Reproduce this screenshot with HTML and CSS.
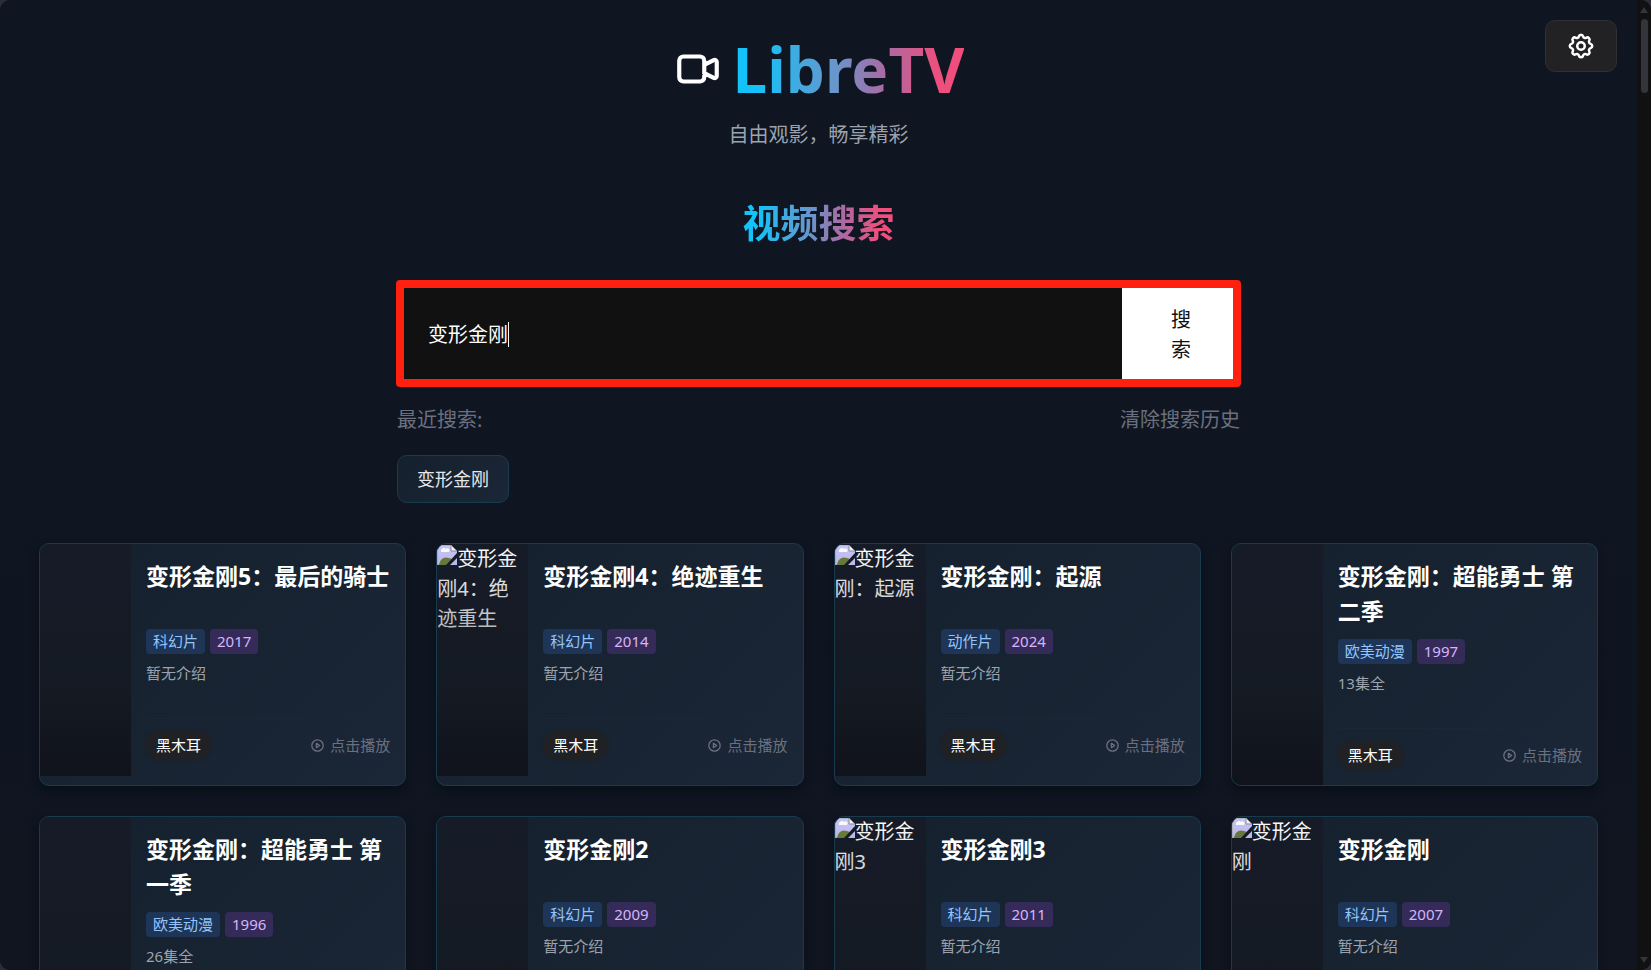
FILE: index.html
```html
<!DOCTYPE html>
<html lang="zh-CN">
<head>
<meta charset="utf-8">
<title>LibreTV</title>
<link rel="stylesheet" href="styles.css">
</head>
<body>
<svg class="sprite" aria-hidden="true">
  <symbol id="play" viewBox="0 0 24 24"><circle cx="12" cy="12" r="10.5" fill="none" stroke="currentColor" stroke-width="2.4"/><path d="M10 8l6 4-6 4z" fill="none" stroke="currentColor" stroke-width="2.4" stroke-linejoin="round"/></symbol>
  <symbol id="broken" viewBox="0 0 20 20"><path d="M0 0h14l6 6v14H0z" fill="#c8c5f8"/><path d="M0 0h14v1H1v18h4v1H0z" fill="#b4b4c0"/><path d="M4 7a3 3 0 0 1 5-3 2 2 0 0 1 3 3z" fill="#fff"/><path d="M2 20c1-6 5-9 10-7l3 1-3 6z" fill="#6c7f3c"/><path d="M14 0v6h6z" fill="#f4f4f8" stroke="#8e8e98" stroke-width="1"/><path d="M20 8L10 19l-1 1h4l7-7z" fill="#161b29"/></symbol>
</svg>
<div class="window">
  <div class="page">
    <header class="header">
      <div class="brand">
        <svg class="brand-icon" viewBox="0 0 24 24" fill="none" stroke="currentColor" stroke-width="2" stroke-linecap="round" stroke-linejoin="round"><path d="M15 10l4.553-2.276A1 1 0 0121 8.618v6.764a1 1 0 01-1.447.894L15 14M5 18h8a2 2 0 002-2V8a2 2 0 00-2-2H5a2 2 0 00-2 2v8a2 2 0 002 2z"/></svg>
        <h1 class="brand-name gradient-text">LibreTV</h1>
      </div>
      <p class="tagline">自由观影，畅享精彩</p>
      <button class="settings" aria-label="设置"><svg viewBox="0 0 24 24" fill="none" stroke="currentColor" stroke-width="2" stroke-linecap="round" stroke-linejoin="round"><path d="M10.325 4.317c.426-1.756 2.924-1.756 3.35 0a1.724 1.724 0 002.573 1.066c1.543-.94 3.31.826 2.37 2.37a1.724 1.724 0 001.065 2.572c1.756.426 1.756 2.924 0 3.35a1.724 1.724 0 00-1.066 2.573c.94 1.543-.826 3.31-2.37 2.37a1.724 1.724 0 00-2.572 1.065c-.426 1.756-2.924 1.756-3.35 0a1.724 1.724 0 00-2.573-1.066c-1.543.94-3.31-.826-2.37-2.37a1.724 1.724 0 00-1.065-2.572c-1.756-.426-1.756-2.924 0-3.35a1.724 1.724 0 001.066-2.573c-.94-1.543.826-3.31 2.37-2.37.996.608 2.296.07 2.572-1.065z"/><path d="M15 12a3 3 0 11-6 0 3 3 0 016 0z"/></svg></button>
    </header>
    <main>
      <section class="search">
        <h2 class="search-title gradient-text">视频搜索</h2>
        <form class="search-box">
          <input class="search-input" type="text" aria-label="搜索视频" value="变形金刚">
          <span class="caret"></span>
          <button class="search-button" type="button">搜<br>索</button>
        </form>
        <div class="recent">
          <span>最近搜索:</span>
          <button class="clear" type="button">清除搜索历史</button>
        </div>
        <button class="recent-tag" type="button">变形金刚</button>
      </section>
      <section class="results">
        <article class="card">
          <div class="poster"></div>
          <div class="info">
            <h3>变形金刚5：最后的骑士</h3>
            <div class="tags"><span class="tag type">科幻片</span><span class="tag year">2017</span></div>
            <p class="desc">暂无介绍</p>
            <div class="foot"><span class="source">黑木耳</span><span class="play"><svg><use href="#play"/></svg>点击播放</span></div>
          </div>
        </article>
        <article class="card">
          <div class="poster"><svg class="broken"><use href="#broken"/></svg>变形金刚4：绝迹重生</div>
          <div class="info">
            <h3>变形金刚4：绝迹重生</h3>
            <div class="tags"><span class="tag type">科幻片</span><span class="tag year">2014</span></div>
            <p class="desc">暂无介绍</p>
            <div class="foot"><span class="source">黑木耳</span><span class="play"><svg><use href="#play"/></svg>点击播放</span></div>
          </div>
        </article>
        <article class="card">
          <div class="poster"><svg class="broken"><use href="#broken"/></svg>变形金刚：起源</div>
          <div class="info">
            <h3>变形金刚：起源</h3>
            <div class="tags"><span class="tag type">动作片</span><span class="tag year">2024</span></div>
            <p class="desc">暂无介绍</p>
            <div class="foot"><span class="source">黑木耳</span><span class="play"><svg><use href="#play"/></svg>点击播放</span></div>
          </div>
        </article>
        <article class="card">
          <div class="poster tall"></div>
          <div class="info">
            <h3>变形金刚：超能勇士 第二季</h3>
            <div class="tags"><span class="tag type">欧美动漫</span><span class="tag year">1997</span></div>
            <p class="desc">13集全</p>
            <div class="foot"><span class="source">黑木耳</span><span class="play"><svg><use href="#play"/></svg>点击播放</span></div>
          </div>
        </article>
        <article class="card">
          <div class="poster tall"></div>
          <div class="info">
            <h3>变形金刚：超能勇士 第一季</h3>
            <div class="tags"><span class="tag type">欧美动漫</span><span class="tag year">1996</span></div>
            <p class="desc">26集全</p>
          </div>
        </article>
        <article class="card">
          <div class="poster"></div>
          <div class="info">
            <h3>变形金刚2</h3>
            <div class="tags"><span class="tag type">科幻片</span><span class="tag year">2009</span></div>
            <p class="desc">暂无介绍</p>
          </div>
        </article>
        <article class="card">
          <div class="poster"><svg class="broken"><use href="#broken"/></svg>变形金刚3</div>
          <div class="info">
            <h3>变形金刚3</h3>
            <div class="tags"><span class="tag type">科幻片</span><span class="tag year">2011</span></div>
            <p class="desc">暂无介绍</p>
          </div>
        </article>
        <article class="card">
          <div class="poster"><svg class="broken"><use href="#broken"/></svg>变形金刚</div>
          <div class="info">
            <h3>变形金刚</h3>
            <div class="tags"><span class="tag type">科幻片</span><span class="tag year">2007</span></div>
            <p class="desc">暂无介绍</p>
          </div>
        </article>
      </section>
    </main>
  </div>
  <div class="scrollbar" aria-hidden="true">
    <svg class="arrow" viewBox="0 0 8 6"><path d="M4 0l4 6H0z" fill="currentColor"/></svg>
    <div class="thumb"></div>
    <svg class="arrow" viewBox="0 0 8 6"><path d="M4 6L0 0h8z" fill="currentColor"/></svg>
  </div>
</div>
</body>
</html>
```
FILE: styles.css
```css
* { box-sizing: border-box; margin: 0; padding: 0; }
body {
  background: #2c2d3a;
  color: #fff;
  font: 20px/30px "Noto Sans", "Noto Sans CJK SC", sans-serif;
}
button, input { font: inherit; color: inherit; border: 0; background: none; }
button { cursor: pointer; }
.sprite { position: absolute; width: 0; height: 0; }
.window {
  display: grid;
  grid-template-columns: 1fr 14px;
  height: 100vh;
  overflow: hidden;
  border-radius: 10px;
  background: #0f1622;
}
.page { overflow: hidden; padding: 39px 39px 0; background: linear-gradient(#0f1622, #101520); }
.header { position: relative; text-align: center; }
.brand { display: flex; justify-content: center; align-items: center; gap: 10px; height: 60px; }
.brand-icon { width: 50px; height: 50px; }
.brand-name { font-size: 62px; line-height: 80px; font-weight: 700; }
.gradient-text {
  background: linear-gradient(to right, #12c2f9 10%, #6a95cb 45%, #a96ba4 65%, #f04e7c 90%);
  -webkit-background-clip: text;
  background-clip: text;
  color: transparent;
}
.tagline { margin-top: 21px; color: #9ca3af; }
.settings {
  position: absolute;
  top: -19px;
  right: -19px;
  display: grid;
  place-items: center;
  width: 72px;
  height: 52px;
  border: 1px solid #2f3036;
  border-radius: 10px;
  background: #222225;
}
.settings svg { width: 30px; height: 30px; }
.search { max-width: 843px; margin: 0 auto; padding-top: 49px; }
.search-title { width: fit-content; margin: 0 auto; font-size: 38px; line-height: 46px; font-weight: 700; }
.search-box { position: relative; display: flex; margin-top: 36px; background: #111; }
.search-box::after {
  content: "";
  position: absolute;
  inset: -1px;
  border: 8px solid #ff2010;
  border-radius: 4px;
  pointer-events: none;
}
.search-input { flex: 1; min-width: 0; padding: 3px 31px 0; outline: 0; }
.caret { position: absolute; left: 111px; top: 41px; width: 1px; height: 25px; background: #fff; }
.search-button { width: 118px; padding: 24px 40px 21px; background: #fff; color: #111; }
.recent { display: flex; justify-content: space-between; margin-top: 19px; color: #6b7080; }
.recent-tag {
  margin-top: 20px;
  padding: 8px 19px;
  border: 1px solid #183b4e;
  border-radius: 10px;
  background: linear-gradient(135deg, #14202c, #1b2737);
  color: #e5e7eb;
  font-size: 18px;
}
.results { display: grid; grid-template-columns: repeat(4, 1fr); gap: 30px; margin-top: 40px; }
.card {
  display: flex;
  align-items: flex-start;
  overflow: hidden;
  min-height: 243px;
  border: 1px solid #183b4e;
  border-radius: 10px;
  background: linear-gradient(135deg, #14202c, #1b2737);
  box-shadow: 0 5px 8px #090f18;
}
.poster { position: relative; flex: 0 0 91px; min-height: 232px; background: #161b28; }
.poster.tall { align-self: stretch; }
.poster::after {
  content: "";
  position: absolute;
  inset: 0;
  background: linear-gradient(transparent, rgba(19, 25, 31, .5) 60%, rgba(16, 18, 26, .9));
}
.broken { width: 20px; height: 20px; vertical-align: 1px; }
.info { flex: 1; min-width: 0; padding: 15px; }
h3 { min-height: 60px; font-size: 23px; line-height: 35px; font-weight: 700; }
.tags { display: flex; gap: 5px; margin-top: 10px; font-size: 15px; line-height: 25px; }
.tag { padding: 0 7px; border-radius: 4px; }
.type { background: #1e3557; color: #93c5fd; }
.year { background: #352b59; color: #d8b4fe; }
.desc { min-height: 40px; margin-top: 9px; color: #9ca3af; font-size: 15px; line-height: 20px; }
.foot {
  display: flex;
  justify-content: space-between;
  align-items: center;
  margin-top: 15px;
  padding-top: 12px;
  border-top: 1px solid #1d2734;
  font-size: 15px;
  line-height: 29px;
}
.source { padding: 0 10px; border-radius: 15px; background: #202124; box-shadow: 0 0 3px #202124; }
.play { display: flex; align-items: center; gap: 6px; color: #6b7080; }
.play svg { width: 13px; height: 13px; }
.scrollbar {
  display: flex;
  flex-direction: column;
  align-items: center;
  padding: 7px 0;
  background: #111;
  color: #33343c;
}
.arrow { width: 8px; height: 6px; }
.thumb { width: 7px; height: 74px; margin: 6px 0 auto; border-radius: 4px; background: #33343c; }
```
